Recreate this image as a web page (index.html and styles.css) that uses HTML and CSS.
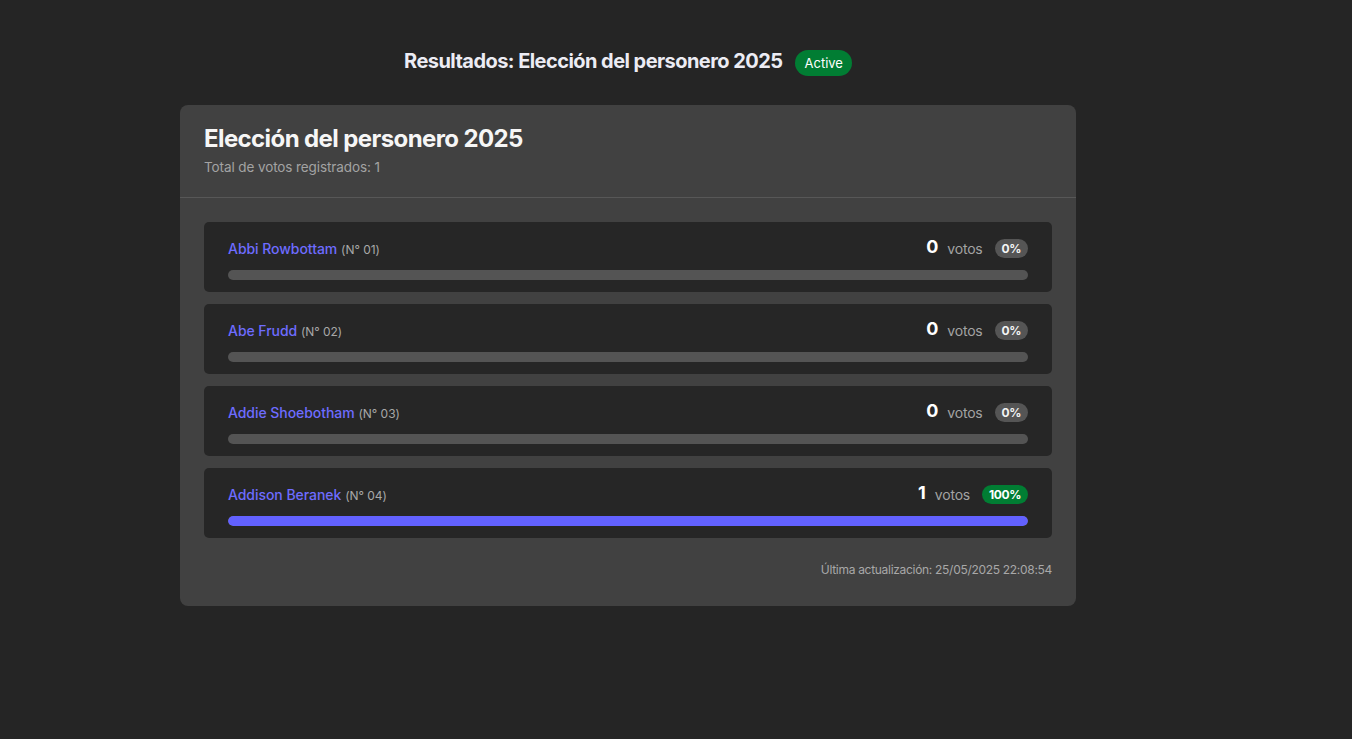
FILE: index.html
```html
<!DOCTYPE html>
<html lang="es">
<head>
<meta charset="utf-8">
<title>Resultados</title>
<link rel="stylesheet" href="styles.css">
</head>
<body>
<div class="page">
  <div class="top">
    <h1 class="top-title">Resultados: Elección del personero 2025</h1>
    <span class="status">Active</span>
  </div>
  <div class="card">
    <div class="card-head">
      <h2 class="card-title">Elección del personero 2025</h2>
      <p class="card-sub">Total de votos registrados: 1</p>
    </div>
    <div class="card-body">
      <div class="row">
        <div class="row-head">
          <div class="name"><span class="cand">Abbi Rowbottam</span> <span class="num">(N° 01)</span></div>
          <div class="stats"><span class="count">0</span><span class="votos">votos</span><span class="pct">0%</span></div>
        </div>
        <div class="bar"><div class="fill" style="width:0%"></div></div>
      </div>
      <div class="row">
        <div class="row-head">
          <div class="name"><span class="cand">Abe Frudd</span> <span class="num">(N° 02)</span></div>
          <div class="stats"><span class="count">0</span><span class="votos">votos</span><span class="pct">0%</span></div>
        </div>
        <div class="bar"><div class="fill" style="width:0%"></div></div>
      </div>
      <div class="row">
        <div class="row-head">
          <div class="name"><span class="cand">Addie Shoebotham</span> <span class="num">(N° 03)</span></div>
          <div class="stats"><span class="count">0</span><span class="votos">votos</span><span class="pct">0%</span></div>
        </div>
        <div class="bar"><div class="fill" style="width:0%"></div></div>
      </div>
      <div class="row">
        <div class="row-head">
          <div class="name"><span class="cand">Addison Beranek</span> <span class="num">(N° 04)</span></div>
          <div class="stats"><span class="count">1</span><span class="votos">votos</span><span class="pct win">100%</span></div>
        </div>
        <div class="bar"><div class="fill" style="width:100%"></div></div>
      </div>
      <p class="updated">Última actualización: 25/05/2025 22:08:54</p>
    </div>
  </div>
</div>
</body>
</html>
```
FILE: styles.css
```css
* { box-sizing: border-box; }
html, body { margin: 0; padding: 0; background: #252525; }
body {
  font-family: Inter, "Noto Sans", sans-serif;
  color: #f2f2f2;
  min-height: 739px;
}
.page {
  width: 896px;
  margin-left: 180px;
  padding-top: 47px;
}
.top {
  display: flex;
  align-items: center;
  justify-content: center;
  gap: 12px;
  height: 28px;
}
.top-title {
  margin: 0;
  font-size: 20px;
  font-weight: 700;
  letter-spacing: -0.55px;
  color: #ececf4;
}
.status {
  background: #017d33;
  color: #fff;
  font-size: 13px;
  padding: 0 9px 0 10px;
  height: 26px;
  line-height: 26px;
  border-radius: 13px;
  margin-top: 3px;
}
.card {
  margin-top: 30px;
  background: #414141;
  border-radius: 8px;
  overflow: hidden;
}
.card-head {
  padding: 20px 24px 0;
  height: 93px;
  border-bottom: 1px solid #575757;
}
.card-title {
  margin: 0;
  font-size: 24px;
  font-weight: 700;
  letter-spacing: -0.6px;
  line-height: 28px;
  color: #f6f6f6;
}
.card-sub {
  margin: 6px 0 0;
  font-size: 13.5px;
  color: #a3a3a3;
  letter-spacing: -0.1px;
}
.card-body {
  padding: 24px 24px 29px;
  display: flex;
  flex-direction: column;
  gap: 12px;
}
.row {
  background: #262626;
  border-radius: 5px;
  padding: 14px 24px 12px;
}
.row-head {
  display: flex;
  align-items: center;
  justify-content: space-between;
  height: 24px;
  margin-bottom: 10px;
}
.name { font-size: 14px; letter-spacing: -0.05px; }
.cand { color: #6e6cff; font-weight: 500; }
.num { color: #a8a8a8; font-size: 12px; }
.stats { display: flex; align-items: center; }
.count {
  font-size: 18px;
  font-weight: 700;
  color: #fff;
  margin-top: -3px;
}
.votos {
  font-size: 14px;
  color: #a3a3a3;
  margin-left: 9px;
  letter-spacing: -0.2px;
}
.pct {
  margin-left: 12px;
  background: #555555;
  color: #f4f4f4;
  font-size: 12px;
  font-weight: 700;
  height: 19px;
  line-height: 19px;
  padding: 0 7px;
  border-radius: 10px;
  letter-spacing: -0.4px;
}
.pct.win { background: #017d33; color: #fff; }
.bar {
  height: 10px;
  background: #545454;
  border-radius: 5px;
  overflow: hidden;
}
.fill {
  height: 100%;
  background: #6261ff;
  border-radius: 5px;
}
.updated {
  margin: 12px 0 0;
  text-align: right;
  font-size: 12px;
  color: #a8a8a8;
  letter-spacing: -0.3px;
}
```
